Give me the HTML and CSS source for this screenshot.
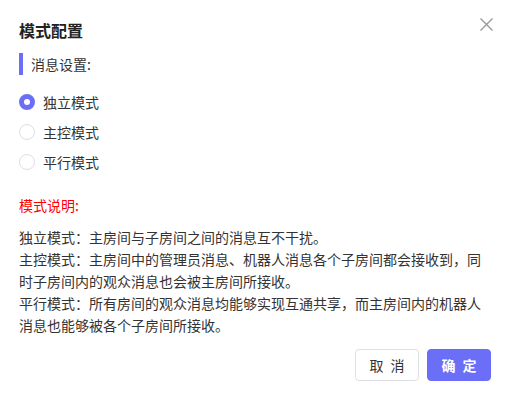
FILE: index.html
```html
<!DOCTYPE html>
<html lang="zh-CN">
<head>
  <meta charset="UTF-8" />
  <title>模式配置</title>
  <link rel="stylesheet" href="styles.css">
</head>
<body>
  <div class="dialog">
    <div class="dialog-header">
      <span class="dialog-title">模式配置</span>
      <button class="close-btn" aria-label="关闭">
        <svg width="13" height="13" viewBox="0 0 13 13">
          <path d="M0.5 0.5 L12.5 12.5 M12.5 0.5 L0.5 12.5" stroke="#999" stroke-width="1.4" fill="none" />
        </svg>
      </button>
    </div>

    <div class="section-title">消息设置:</div>

    <div class="radio-group">
      <label class="radio checked"><span class="radio-dot"></span>独立模式</label>
      <label class="radio"><span class="radio-dot"></span>主控模式</label>
      <label class="radio"><span class="radio-dot"></span>平行模式</label>
    </div>

    <div class="note-title">模式说明:</div>
    <p class="note">
      独立模式：主房间与子房间之间的消息互不干扰。<br>
      主控模式：主房间中的管理员消息、机器人消息各个子房间都会接收到，同时子房间内的观众消息也会被主房间所接收。<br>
      平行模式：所有房间的观众消息均能够实现互通共享，而主房间内的机器人消息也能够被各个子房间所接收。
    </p>

    <div class="dialog-footer">
      <button class="btn">取 消</button>
      <button class="btn btn-primary">确 定</button>
    </div>
  </div>
</body>
</html>
```

FILE: styles.css
```css
body {
  margin: 0;
  background: #fff;
  font-family: "Noto Sans CJK SC", "Noto Sans", sans-serif;
  color: #333;
  font-size: 14px;
}

.dialog {
  padding: 18px 21px 18px 19px;
}

.dialog-header {
  display: flex;
  justify-content: space-between;
  align-items: flex-start;
  height: 24px;
}

.dialog-title {
  font-size: 16px;
  font-weight: bold;
  line-height: 24px;
  color: #222;
}

.close-btn {
  border: none;
  background: none;
  padding: 0;
  margin: 0 -2px 0 0;
  width: 13px;
  height: 13px;
  cursor: pointer;
  display: flex;
}

.section-title {
  margin-top: 11px;
  border-left: 4px solid #6b6ff8;
  padding-left: 8px;
  line-height: 22px;
  height: 22px;
}

.radio-group {
  margin-top: 12px;
}

.radio {
  display: flex;
  align-items: center;
  height: 30px;
  gap: 8px;
  cursor: pointer;
}

.radio-dot {
  box-sizing: border-box;
  width: 16px;
  height: 16px;
  border-radius: 50%;
  border: 1px solid #dcdfe6;
  background: #fff;
}

.radio.checked .radio-dot {
  border: 5px solid #6b6ff8;
}

.note-title {
  margin-top: 17px;
  color: #f00;
  line-height: 22px;
}

.note {
  margin: 10px 0 0;
  line-height: 22px;
}

.dialog-footer {
  display: flex;
  justify-content: flex-end;
  gap: 8px;
  margin-top: 13px;
}

.btn {
  width: 64px;
  height: 32px;
  border: 1px solid #dcdfe6;
  border-radius: 4px;
  background: #fff;
  color: #333;
  font-family: inherit;
  font-size: 14px;
  letter-spacing: 2px;
  text-indent: 2px;
  padding: 0;
  cursor: pointer;
}

.btn-primary {
  background: #6b6ff8;
  border-color: #6b6ff8;
  color: #fff;
  font-weight: bold;
}
```
